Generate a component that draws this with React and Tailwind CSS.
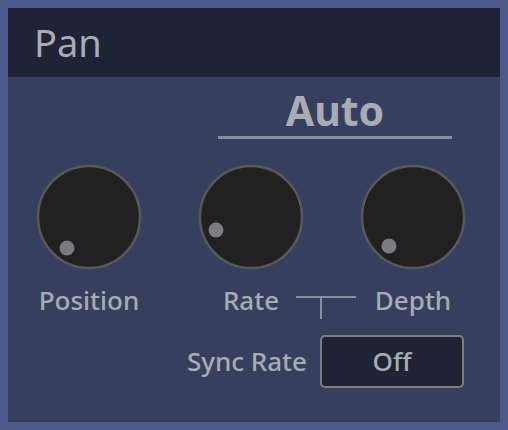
import React from "react";

const font = { fontFamily: '"Noto Sans", "Open Sans", sans-serif' };

function Knob({ dx, dy }) {
  return (
    <svg width="106" height="106" viewBox="0 0 106 106">
      <circle cx="53" cy="53" r="51" fill="#212121" stroke="#58585c" strokeWidth="2.5" />
      <circle cx={53 + dx} cy={53 + dy} r="7.5" fill="#7b7b80" />
    </svg>
  );
}

export default function App() {
  return (
    <div className="w-[508px] h-[430px] bg-[#4b5a8b] p-2" style={font}>
      <div className="flex flex-col w-full h-full bg-[#363f5e] text-[#a8acb3]">
        <div className="h-[69px] bg-[#1f2336] flex items-center pl-[26px]">
          <span className="text-[38px] leading-none pb-[2px]">Pan</span>
        </div>
        <div className="ml-[210px] w-[234px] flex flex-col items-center mt-[10px]">
          <span className="text-[41px] font-bold leading-[46px]">Auto</span>
          <div className="w-full h-[3px] bg-[#8a8fa0] mt-[3px]"></div>
        </div>
        <div className="grid grid-cols-[162px_162px_162px] mt-[25px]">
          <div className="flex justify-center"><Knob dx={-22} dy={31} /></div>
          <div className="flex justify-center"><Knob dx={-35} dy={13} /></div>
          <div className="flex justify-center"><Knob dx={-24} dy={29} /></div>
        </div>
        <div className="relative grid grid-cols-[162px_162px_162px] mt-[12px] h-[36px] text-[26px] font-medium leading-[36px]">
          <div className="text-center">Position</div>
          <div className="text-center">Rate</div>
          <div className="text-center">Depth</div>
          <svg className="absolute left-[288px] top-[14px]" width="60" height="24" viewBox="0 0 60 24">
            <line x1="0" y1="1" x2="60" y2="1" stroke="#8a8fa0" strokeWidth="2" />
            <line x1="25" y1="1" x2="25" y2="23" stroke="#8a8fa0" strokeWidth="2" />
          </svg>
        </div>
        <div className="flex items-center mt-[17px]">
          <div className="w-[299px] text-right text-[26px] font-medium">Sync Rate</div>
          <div className="ml-[13px] w-[144px] h-[53px] rounded-[5px] border-2 border-[#7c7e84] bg-[#1f2336] flex items-center justify-center text-[26px] font-medium">
            Off
          </div>
        </div>
      </div>
    </div>
  );
}
